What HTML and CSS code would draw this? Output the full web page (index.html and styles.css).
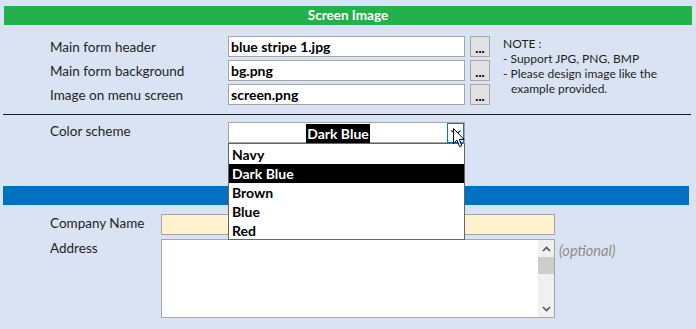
FILE: index.html
```html
<!DOCTYPE html>
<html lang="en">
<head>
    <meta charset="UTF-8">
    <title>Screen Image Settings</title>
    <link rel="stylesheet" href="styles.css">
</head>
<body>

    <!-- Screen Image Section -->
    <div class="band band-green">Screen Image</div>

    <div class="image-block">
        <div class="file-rows">
            <div class="file-row">
                <span class="field-label">Main form header</span>
                <div class="text-box">blue stripe 1.jpg</div>
                <div class="browse-btn">...</div>
            </div>
            <div class="file-row">
                <span class="field-label">Main form background</span>
                <div class="text-box">bg.png</div>
                <div class="browse-btn">...</div>
            </div>
            <div class="file-row">
                <span class="field-label">Image on menu screen</span>
                <div class="text-box">screen.png</div>
                <div class="browse-btn">...</div>
            </div>
        </div>
        <div class="note">
            <div>NOTE :</div>
            <div>- Support JPG, PNG, BMP</div>
            <div>- Please design image like the</div>
            <div class="note-indent">example provided.</div>
        </div>
    </div>

    <div class="divider"></div>

    <!-- Color Scheme -->
    <div class="scheme-row">
        <span class="field-label">Color scheme</span>
        <div class="combo">
            <div class="combo-value"><span class="combo-selected">Dark Blue</span></div>
            <div class="combo-btn">
                <svg width="10" height="6" viewBox="0 0 10 6"><path d="M0.5 0.5 L5 5 L9.5 0.5" fill="none" stroke="#333" stroke-width="1.2"/></svg>
            </div>
            <ul class="combo-list">
                <li>Navy</li>
                <li class="active">Dark Blue</li>
                <li>Brown</li>
                <li>Blue</li>
                <li>Red</li>
            </ul>
            <svg class="cursor" width="13" height="20" viewBox="0 0 13 20">
                <path d="M0.5 0.5 L0.5 15.5 L4 12.2 L6.6 18.6 L8.8 17.6 L6.3 11.4 L11 11.4 Z" fill="#fff" stroke="#000" stroke-width="1"/>
            </svg>
        </div>
    </div>

    <!-- Company Section -->
    <div class="band band-blue"></div>

    <div class="company-row">
        <span class="field-label short">Company Name</span>
        <div class="text-box wide yellow"></div>
    </div>
    <div class="address-row">
        <span class="field-label short">Address</span>
        <div class="text-area">
            <div class="scrollbar">
                <span class="scroll-arrow">
                    <svg width="9" height="6" viewBox="0 0 9 6"><path d="M1 5 L4.5 1.5 L8 5" fill="none" stroke="#555" stroke-width="1.6"/></svg>
                </span>
                <span class="scroll-thumb"></span>
                <span class="scroll-space"></span>
                <span class="scroll-arrow">
                    <svg width="9" height="6" viewBox="0 0 9 6"><path d="M1 1 L4.5 4.5 L8 1" fill="none" stroke="#555" stroke-width="1.6"/></svg>
                </span>
            </div>
        </div>
        <span class="optional">(optional)</span>
    </div>

</body>
</html>
```

FILE: styles.css
```css
/* Global Styles */
body {
    font-family: 'Lato', 'Open Sans', sans-serif;
    font-size: 13.5px;
    background-color: #dae3f3;
    color: #1f1f1f;
    margin: 0;
    padding: 6px 0 0 0;
    width: 696px;
    height: 329px;
    overflow: hidden;
}

/* Section Bands */
.band {
    height: 19px;
    color: #fff;
    font-weight: bold;
    text-align: center;
    line-height: 19px;
}
.band-green {
    background-color: #22b14c;
    margin: 0 4px;
}
.band-blue {
    background-color: #0070c0;
    margin: 43px 7px 0 3px;
}

.field-label {
    display: inline-block;
    width: 178px;
    padding-left: 50px;
}
.field-label.short {
    width: 111px;
}

.text-box {
    box-sizing: border-box;
    width: 237px;
    height: 21px;
    background: #fff;
    border: 1px solid #a6a6a6;
    font-weight: bold;
    font-size: 14px;
    color: #000;
    padding-left: 2px;
    line-height: 19px;
}
.text-box.wide {
    width: 394px;
}
.text-box.yellow {
    background: #fff2cc;
}

/* Screen Image Section */
.image-block {
    display: flex;
    margin-top: 11px;
}
.file-rows {
    display: flex;
    flex-direction: column;
    gap: 3px;
}
.file-row {
    display: flex;
    align-items: center;
}
.browse-btn {
    box-sizing: border-box;
    width: 20px;
    height: 21px;
    margin-left: 5px;
    background: #e1e1e1;
    border: 1px solid #a6a6a6;
    font-weight: 900;
    font-size: 13px;
    line-height: 22px;
    text-align: center;
    color: #000;
}
.note {
    margin-left: 13px;
    font-size: 12px;
    line-height: 15px;
}
.note-indent {
    padding-left: 8px;
}

.divider {
    height: 1px;
    background: #1a1a1a;
    margin: 9px 5px 0 3px;
}

/* Color Scheme */
.scheme-row {
    display: flex;
    margin-top: 7px;
    line-height: 19px;
}
.combo {
    position: relative;
    box-sizing: border-box;
    width: 237px;
    height: 21px;
    background: #fff;
    border: 1px solid #a6a6a6;
    display: flex;
}
.combo-value {
    flex: 1;
    text-align: center;
    font-weight: bold;
    font-size: 14px;
    padding-top: 1px;
}
.combo-selected {
    background: #000;
    color: #fff;
    padding: 1px 1px;
}
.combo-btn {
    box-sizing: border-box;
    width: 17px;
    height: 20px;
    border: 1px solid #0078d7;
    background: #fff;
    display: flex;
    align-items: center;
    justify-content: center;
}
.combo-list {
    position: absolute;
    top: 20px;
    left: -1px;
    box-sizing: border-box;
    width: 237px;
    height: 97px;
    margin: 0;
    padding: 1px 0 0 0;
    list-style: none;
    background: #fff;
    border: 1px solid #646464;
    font-weight: bold;
    font-size: 14px;
    color: #000;
    z-index: 2;
}
.combo-list li {
    height: 19px;
    line-height: 20px;
    padding-left: 3px;
}
.combo-list li.active {
    background: #000;
    color: #fff;
}
.cursor {
    position: absolute;
    left: 224px;
    top: 5px;
    z-index: 3;
}

/* Company Section */
.company-row {
    display: flex;
    margin-top: 9px;
    line-height: 19px;
}
.address-row {
    display: flex;
    margin-top: 4px;
    line-height: 19px;
}
.text-area {
    box-sizing: border-box;
    width: 394px;
    height: 79px;
    background: #fff;
    border: 1px solid #a6a6a6;
    display: flex;
    justify-content: flex-end;
}
.scrollbar {
    width: 16px;
    background: #f0f0f0;
    display: flex;
    flex-direction: column;
}
.scroll-arrow {
    height: 17px;
    display: flex;
    align-items: center;
    justify-content: center;
}
.scroll-thumb {
    height: 17px;
    background: #cdcdcd;
}
.scroll-space {
    flex: 1;
}
.optional {
    margin-left: 4px;
    margin-top: 2px;
    font-size: 14.5px;
    font-style: italic;
    color: #8c8c8c;
}
```
